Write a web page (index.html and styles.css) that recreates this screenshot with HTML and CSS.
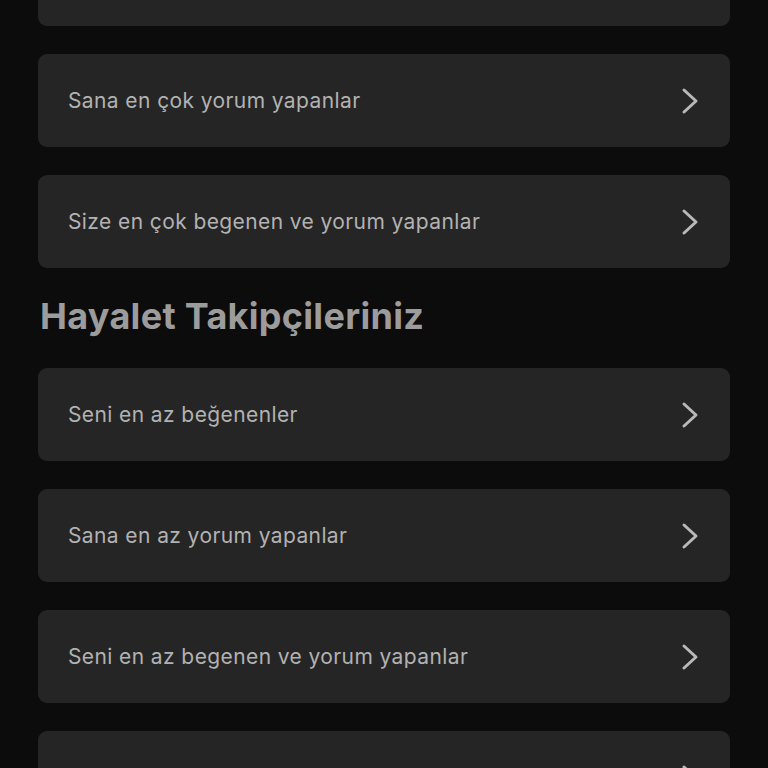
FILE: index.html
```html
<!DOCTYPE html>
<html lang="tr">
<head>
<meta charset="utf-8">
<link rel="stylesheet" href="styles.css">
</head>
<body>
<main class="page">
  <section class="group">
    <a class="row"><span class="label">Seni en çok beğenenler</span><svg class="chev" viewBox="0 0 18 28"><path d="M3 3 L15 14 L3 25"/></svg></a>
    <a class="row"><span class="label">Sana en çok yorum yapanlar</span><svg class="chev" viewBox="0 0 18 28"><path d="M3 3 L15 14 L3 25"/></svg></a>
    <a class="row"><span class="label">Size en çok begenen ve yorum yapanlar</span><svg class="chev" viewBox="0 0 18 28"><path d="M3 3 L15 14 L3 25"/></svg></a>
  </section>
  <h2 class="title">Hayalet Takipçileriniz</h2>
  <section class="group">
    <a class="row"><span class="label">Seni en az beğenenler</span><svg class="chev" viewBox="0 0 18 28"><path d="M3 3 L15 14 L3 25"/></svg></a>
    <a class="row"><span class="label">Sana en az yorum yapanlar</span><svg class="chev" viewBox="0 0 18 28"><path d="M3 3 L15 14 L3 25"/></svg></a>
    <a class="row"><span class="label">Seni en az begenen ve yorum yapanlar</span><svg class="chev" viewBox="0 0 18 28"><path d="M3 3 L15 14 L3 25"/></svg></a>
    <a class="row"><span class="label">Seni hiç beğenmeyen ve yorum yapmayanlar</span><svg class="chev" viewBox="0 0 18 28"><path d="M3 3 L15 14 L3 25"/></svg></a>
  </section>
</main>
</body>
</html>
```
FILE: styles.css
```css
html, body {
  margin: 0;
  padding: 0;
  background: #0c0c0c;
  height: 100%;
  overflow: hidden;
}
body {
  font-family: Inter, "Noto Sans", sans-serif;
}
.page {
  padding: 0 38px;
  margin-top: -67px;
}
.group {
  display: flex;
  flex-direction: column;
  gap: 28px;
}
.row {
  display: flex;
  align-items: center;
  justify-content: space-between;
  height: 93px;
  box-sizing: border-box;
  padding: 0 31px 0 30px;
  background: #252525;
  border-radius: 9px;
}
.label {
  color: #b2b2b2;
  font-size: 21px;
  letter-spacing: 0.4px;
}
.chev {
  width: 18px;
  height: 28px;
  fill: none;
  stroke: #b9b9b9;
  stroke-width: 3;
  stroke-linecap: round;
  stroke-linejoin: round;
}
.title {
  margin: 0;
  padding: 26px 0 30px 2px;
  font-size: 36px;
  line-height: 44px;
  font-weight: 700;
  color: #9c9c9c;
  letter-spacing: 0.3px;
}
```
